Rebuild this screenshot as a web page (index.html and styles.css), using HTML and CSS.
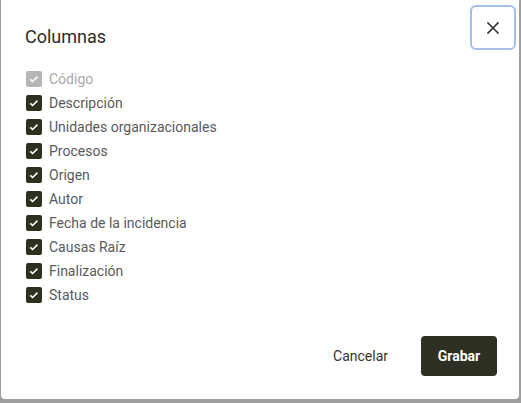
FILE: index.html
```html
<!DOCTYPE html>
<html lang="es">
<head>
<meta charset="utf-8">
<link rel="stylesheet" href="styles.css">
</head>
<body>
<div class="dialog">
  <div class="header">
    <h2 class="title">Columnas</h2>
    <button class="close" aria-label="Cerrar">
      <svg width="14" height="14" viewBox="0 0 14 14"><path d="M2 2L12 12M12 2L2 12" stroke="#333" stroke-width="1.6" stroke-linecap="square"/></svg>
    </button>
  </div>
  <ul class="list">
    <li class="item disabled"><span class="cb"><svg viewBox="0 0 16 16" width="16" height="16"><path d="M4.3 8.3l2.3 2.2 4.9-4.9" fill="none" stroke="#fff" stroke-width="1.6"/></svg></span>Código</li>
    <li class="item"><span class="cb"><svg viewBox="0 0 16 16" width="16" height="16"><path d="M4.3 8.3l2.3 2.2 4.9-4.9" fill="none" stroke="#fff" stroke-width="1.6"/></svg></span>Descripción</li>
    <li class="item"><span class="cb"><svg viewBox="0 0 16 16" width="16" height="16"><path d="M4.3 8.3l2.3 2.2 4.9-4.9" fill="none" stroke="#fff" stroke-width="1.6"/></svg></span>Unidades organizacionales</li>
    <li class="item"><span class="cb"><svg viewBox="0 0 16 16" width="16" height="16"><path d="M4.3 8.3l2.3 2.2 4.9-4.9" fill="none" stroke="#fff" stroke-width="1.6"/></svg></span>Procesos</li>
    <li class="item"><span class="cb"><svg viewBox="0 0 16 16" width="16" height="16"><path d="M4.3 8.3l2.3 2.2 4.9-4.9" fill="none" stroke="#fff" stroke-width="1.6"/></svg></span>Origen</li>
    <li class="item"><span class="cb"><svg viewBox="0 0 16 16" width="16" height="16"><path d="M4.3 8.3l2.3 2.2 4.9-4.9" fill="none" stroke="#fff" stroke-width="1.6"/></svg></span>Autor</li>
    <li class="item"><span class="cb"><svg viewBox="0 0 16 16" width="16" height="16"><path d="M4.3 8.3l2.3 2.2 4.9-4.9" fill="none" stroke="#fff" stroke-width="1.6"/></svg></span>Fecha de la incidencia</li>
    <li class="item"><span class="cb"><svg viewBox="0 0 16 16" width="16" height="16"><path d="M4.3 8.3l2.3 2.2 4.9-4.9" fill="none" stroke="#fff" stroke-width="1.6"/></svg></span>Causas Raíz</li>
    <li class="item"><span class="cb"><svg viewBox="0 0 16 16" width="16" height="16"><path d="M4.3 8.3l2.3 2.2 4.9-4.9" fill="none" stroke="#fff" stroke-width="1.6"/></svg></span>Finalización</li>
    <li class="item"><span class="cb"><svg viewBox="0 0 16 16" width="16" height="16"><path d="M4.3 8.3l2.3 2.2 4.9-4.9" fill="none" stroke="#fff" stroke-width="1.6"/></svg></span>Status</li>
  </ul>
  <div class="footer">
    <button class="btn-text">Cancelar</button>
    <button class="btn-primary">Grabar</button>
  </div>
</div>
</body>
</html>
```
FILE: styles.css
```css
* { box-sizing: border-box; }
html, body { margin: 0; padding: 0; }
body {
  width: 521px;
  height: 403px;
  background: #9e9e9e;
  font-family: Roboto, "Liberation Sans", sans-serif;
  overflow: hidden;
}
.dialog {
  margin-left: 1px;
  width: 518px;
  height: 399px;
  background: #fff;
  border-radius: 0 0 4px 4px;
  display: flex;
  flex-direction: column;
}
.header {
  display: flex;
  justify-content: space-between;
  align-items: flex-start;
  padding: 5px 3px 0 24px;
}
.title {
  margin: 20px 0 0 0;
  font-size: 18px;
  line-height: 24px;
  font-weight: 400;
  color: #2b2b2b;
}
.close {
  width: 46px;
  height: 45px;
  border: 2px solid #a6bfe9;
  border-radius: 6px;
  background: #fff;
  display: flex;
  align-items: center;
  justify-content: center;
  padding: 0;
}
.list {
  list-style: none;
  margin: 17px 0 0 0;
  padding: 0 0 0 25px;
}
.item {
  display: flex;
  align-items: center;
  height: 24px;
  font-size: 14px;
  color: #5a5a5a;
}
.cb {
  width: 16px;
  height: 16px;
  border-radius: 2px;
  background: #2e3122;
  margin-right: 7px;
  display: flex;
}
.item.disabled { color: #a8a8a8; }
.item.disabled .cb { background: #b5b5b5; }
.footer {
  margin-top: auto;
  display: flex;
  justify-content: flex-end;
  align-items: center;
  gap: 13px;
  padding: 0 22px 23px 0;
}
.btn-text {
  border: none;
  background: none;
  font-family: inherit;
  font-size: 14px;
  color: #333;
  padding: 0 20px;
  height: 40px;
}
.btn-primary {
  border: none;
  background: #2d3022;
  color: #fff;
  font-family: inherit;
  font-size: 14px;
  font-weight: 700;
  width: 76px;
  height: 40px;
  border-radius: 4px;
}
```
